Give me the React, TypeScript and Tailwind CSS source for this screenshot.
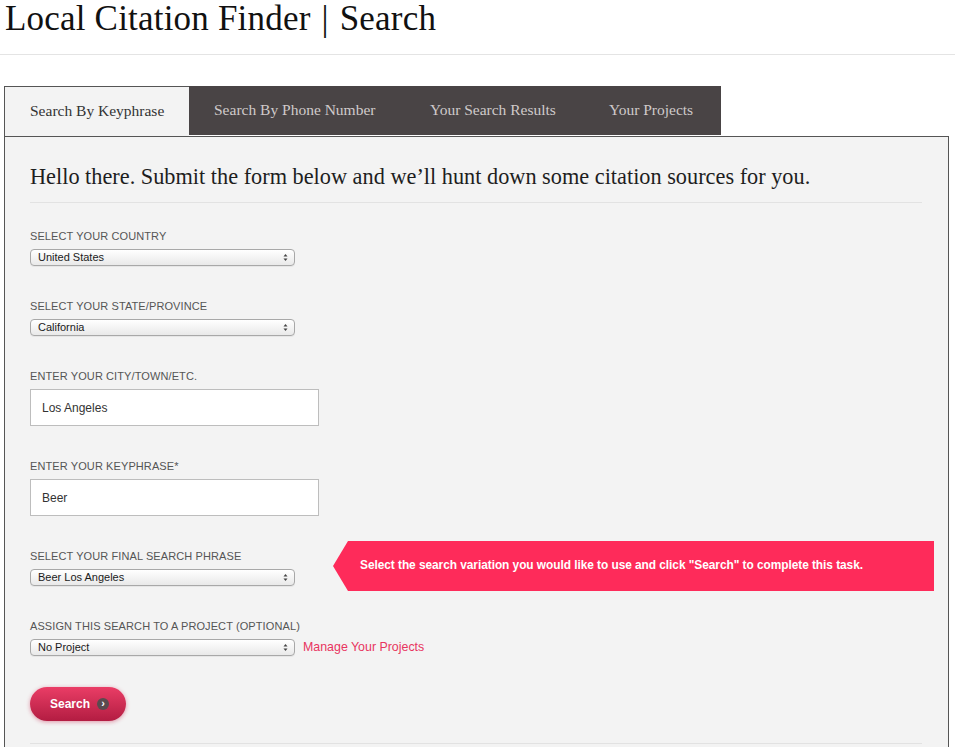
import React from "react";

const serif = { fontFamily: '"Liberation Serif", "DejaVu Serif", serif' };

function Label({ children }: { children: React.ReactNode }) {
  return (
    <div className="text-[11px] leading-[12px] text-[#555] uppercase tracking-[0.1px] font-['Liberation_Sans',Arial,sans-serif]">
      {children}
    </div>
  );
}

function Select({ value }: { value: string }) {
  return (
    <div className="mt-[7px] flex h-[17px] w-[265px] items-center justify-between rounded-[4px] border border-[#a8a8a8] bg-gradient-to-b from-white to-[#e9e9e9] pl-[7px] pr-[6px] shadow-[0_1px_0_rgba(0,0,0,0.05)]">
      <span className="text-[11px] leading-[15px] text-[#1a1a1a] font-['Liberation_Sans',Arial,sans-serif]">{value}</span>
      <svg width="5" height="9" viewBox="0 0 5 9" className="text-[#444]">
        <path d="M0.5 3.5 L2.5 1 L4.5 3.5 Z" fill="currentColor" />
        <path d="M0.5 5.5 L2.5 8 L4.5 5.5 Z" fill="currentColor" />
      </svg>
    </div>
  );
}

function Input({ value }: { value: string }) {
  return (
    <div className="mt-[7px] flex h-[37px] w-[289px] items-center border border-[#bdbdbd] bg-white pl-[11px] text-[12px] text-[#333] font-['Liberation_Sans',Arial,sans-serif]">
      {value}
    </div>
  );
}

export default function App() {
  return (
    <div className="min-h-[747px] bg-white font-['Liberation_Sans',Arial,sans-serif]">
      <header className="h-[55px] border-b border-[#e4e4e4] pl-[5px]">
        <h1 style={serif} className="text-[35px] leading-[38px] text-[#111] tracking-[0.2px]">
          Local Citation Finder <span className="mx-[2px]">|</span> Search
        </h1>
      </header>

      <div className="pl-[4px] pr-[6px] pt-[31px]">
        <div className="flex h-[50px]">
          <div
            style={serif}
            className="relative z-10 -mb-px flex h-[50px] w-[185px] items-center border-l border-t border-[#555] bg-[#f3f3f3] pb-[2px] pl-[25px] text-[15.5px] text-[#333]"
          >
            Search By Keyphrase
          </div>
          <div style={serif} className="flex h-[49px] items-center bg-[#494445] pb-[2px] text-[15.5px] text-[#cfcaca]">
            <div className="w-[216px] pl-[25px]">Search By Phone Number</div>
            <div className="w-[180px] pl-[25px]">Your Search Results</div>
            <div className="w-[136px] pl-[24px]">Your Projects</div>
          </div>
        </div>

        <div className="border border-[#555] bg-[#f3f3f3] pl-[25px] pr-[26px] pt-[25px] pb-[10px] min-h-[620px]">
          <h2 style={serif} className="text-[22.3px] leading-[30px] text-[#1e1e1e]">
            Hello there. Submit the form below and we’ll hunt down some citation sources for you.
          </h2>
          <div className="mt-[10px] border-t border-[#e2e2e2]" />

          <div className="mt-[27px]">
            <Label>Select your country</Label>
            <Select value="United States" />
          </div>

          <div className="mt-[34px]">
            <Label>Select your state/province</Label>
            <Select value="California" />
          </div>

          <div className="mt-[34px]">
            <Label>Enter your city/town/etc.</Label>
            <Input value="Los Angeles" />
          </div>

          <div className="mt-[34px]">
            <Label>Enter your keyphrase*</Label>
            <Input value="Beer" />
          </div>

          <div className="mt-[34px] flex items-start">
            <div className="shrink-0">
              <Label>Select your final search phrase</Label>
              <Select value="Beer Los Angeles" />
            </div>
            <div className="-mt-[9px] -mb-[5px] ml-[38px] flex h-[50px] w-[601px] shrink-0 items-center bg-[#fe2b5a] pl-[27px] text-[11.9px] font-bold tracking-[-0.05px] text-white [clip-path:polygon(15px_0,100%_0,100%_100%,15px_100%,0_50%)]">
              Select the search variation you would like to use and click "Search" to complete this task.
            </div>
          </div>

          <div className="mt-[34px]">
            <Label>Assign this search to a project (optional)</Label>
            <div className="flex items-end">
              <Select value="No Project" />
              <a className="ml-[8px] mb-[1px] text-[12.4px] leading-[15px] text-[#e8355f]">Manage Your Projects</a>
            </div>
          </div>

          <button className="mt-[31px] flex h-[34px] w-[96px] items-center rounded-full bg-gradient-to-b from-[#ea3d66] to-[#b31c42] pl-[20px] text-[12px] font-bold text-white shadow-[0_1px_4px_rgba(200,30,70,0.45)]">
            Search
            <span className="ml-[7px] flex h-[12px] w-[12px] items-center justify-center rounded-full bg-[#5a4b4f] pb-[1px] text-[11px] font-bold leading-none text-white">
              ›
            </span>
          </button>

          <div className="mt-[22px] border-t border-[#e2e2e2]" />
        </div>
      </div>
    </div>
  );
}
